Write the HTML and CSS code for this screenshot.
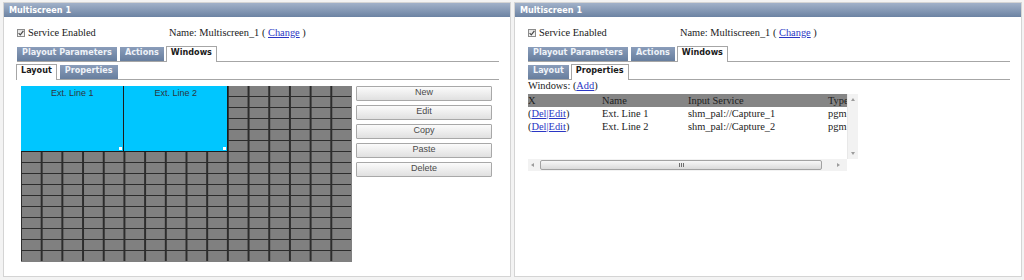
FILE: index.html
```html
<!DOCTYPE html>
<html>
<head>
<meta charset="utf-8">
<title>Multiscreen</title>
<link rel="stylesheet" href="styles.css">
</head>
<body>
<div class="panel">
  <div class="phead">Multiscreen 1</div>
  <div class="pbody">
    <div class="info">
      <label class="svc"><span class="cb"><svg width="6" height="6" viewBox="0 0 6 6"><path d="M0.6 3.1 L2.3 4.9 L5.4 0.8" fill="none" stroke="#4a4a4a" stroke-width="1.2"/></svg></span>Service Enabled</label>
      <div class="name">Name: Multiscreen_1 ( <a href="#">Change</a> )</div>
    </div>
    <div class="tabs">
      <span class="tab">Playout Parameters</span><span class="tab">Actions</span><span class="tab active">Windows</span>
    </div>
    <div class="tabs sub">
      <span class="tab active">Layout</span><span class="tab">Properties</span>
    </div>
    <div class="layout">
      <div class="canvas">
        <div class="win" style="left:0%;top:0%;width:31.25%;height:37.5%">Ext. Line 1<span class="handle"></span></div>
        <div class="win" style="left:31.25%;top:0%;width:31.25%;height:37.5%">Ext. Line 2<span class="handle"></span></div>
      </div>
      <div class="btns">
        <div class="btn">New</div>
        <div class="btn">Edit</div>
        <div class="btn">Copy</div>
        <div class="btn">Paste</div>
        <div class="btn">Delete</div>
      </div>
    </div>
  </div>
</div>
<div class="panel">
  <div class="phead">Multiscreen 1</div>
  <div class="pbody">
    <div class="info">
      <label class="svc"><span class="cb"><svg width="6" height="6" viewBox="0 0 6 6"><path d="M0.6 3.1 L2.3 4.9 L5.4 0.8" fill="none" stroke="#4a4a4a" stroke-width="1.2"/></svg></span>Service Enabled</label>
      <div class="name">Name: Multiscreen_1 ( <a href="#">Change</a> )</div>
    </div>
    <div class="tabs">
      <span class="tab">Playout Parameters</span><span class="tab">Actions</span><span class="tab active">Windows</span>
    </div>
    <div class="tabs sub">
      <span class="tab">Layout</span><span class="tab active">Properties</span>
    </div>
    <div class="wtitle">Windows: (<a href="#">Add</a>)</div>
    <div class="scroller">
      <div class="viewport">
        <table>
          <colgroup><col class="c1"><col class="c2"><col class="c3"><col class="c4"></colgroup>
          <thead><tr><th>X</th><th>Name</th><th>Input Service</th><th>Type</th></tr></thead>
          <tbody>
            <tr><td>(<a href="#">Del</a><a href="#">|Edit</a>)</td><td>Ext. Line 1</td><td>shm_pal://Capture_1</td><td>pgm</td></tr>
            <tr><td>(<a href="#">Del</a><a href="#">|Edit</a>)</td><td>Ext. Line 2</td><td>shm_pal://Capture_2</td><td>pgm</td></tr>
          </tbody>
        </table>
      </div>
      <div class="vbar"><span class="arr up"></span><span class="arr down"></span></div>
      <div class="hbar"><span class="arr left"></span><span class="thumb"><span class="grip"></span></span><span class="arr right"></span></div>
      <div class="corner"></div>
    </div>
  </div>
</div>
</body>
</html>
```

FILE: styles.css
```css
* { box-sizing: border-box; }
html, body { margin: 0; }
body {
  background: #f3f3f3;
  display: flex;
  gap: 3px;
  padding: 2px 0 0 3px;
  height: 280px;
  overflow: hidden;
  font-family: "Liberation Serif", serif;
  font-size: 10.4px;
  color: #1a1a1a;
}
a { color: #2a36c4; text-decoration: underline; }

.panel {
  width: 508px;
  height: 275px;
  background: #fff;
  border: 1px solid #d4d4d4;
  display: flex;
  flex-direction: column;
}
.phead {
  height: 14px;
  line-height: 14px;
  padding-left: 5px;
  background: linear-gradient(#a1b1c9, #6c83a3);
  color: #fff;
  font: bold 9px "DejaVu Sans Condensed", "DejaVu Sans", sans-serif;
  line-height: 14px;
}
.pbody { padding: 0 11px 0 13px; }

.info {
  display: grid;
  grid-template-columns: 152px auto;
  margin-top: 9px;
  height: 13px;
  line-height: 13px;
  align-items: center;
}
.svc { display: flex; align-items: center; gap: 3px; }
.cb {
  width: 8px; height: 8px;
  border: 1px solid #8b8b8b;
  background: linear-gradient(#e4e4e4, #f8f8f8);
  display: flex; align-items: center; justify-content: center;
}
.cb svg { display: block; }

.tabs {
  display: flex;
  align-items: flex-end;
  height: 16px;
  margin-top: 7px;
  border-bottom: 1px solid #a6a6a6;
}
.tabs.sub { margin-top: 2px; }
.tab {
  height: 14px;
  line-height: 15px;
  padding: 0 5px;
  margin-right: 3px;
  background: linear-gradient(#8a9dba, #677e9e);
  color: #eef2f8;
  font: bold 9px "DejaVu Sans Condensed", "DejaVu Sans", sans-serif;
  white-space: nowrap;
}
.tab.active {
  height: 16px;
  margin-bottom: -1px;
  margin-left: -1px;
  padding: 0 4px;
  background: #fff;
  color: #1a1a1a;
  border: 1px solid #a6a6a6;
  border-bottom: none;
}

.layout {
  display: flex;
  align-items: flex-start;
  gap: 4px;
  margin-top: 6px;
  padding-left: 4px;
}
.canvas {
  position: relative;
  width: 331px;
  height: 176px;
  background: #808080;
  overflow: hidden;
  flex: none;
}
.canvas::before {
  content: "";
  display: block;
  width: 100%;
  height: 100%;
  margin: -1.5px 0 0 -1.5px;
  background-image:
    linear-gradient(to right, #2c2c2c 0 1.5px, transparent 1.5px),
    linear-gradient(to bottom, #2c2c2c 0 1.5px, transparent 1.5px);
  background-size: 20.6875px 11px;
}
.win {
  position: absolute;
  background: #00c6ff;
  border-right: 1px solid #1c1c1c;
  border-bottom: 1px solid #1c1c1c;
  font: 9px "Liberation Sans", Arial, sans-serif;
  color: #2c3540;
  text-align: center;
  line-height: 11px;
  padding-top: 2px;
}
.handle {
  position: absolute;
  right: 1px;
  bottom: 1px;
  width: 3px;
  height: 3px;
  background: #fff;
}
.btns {
  width: 136px;
  display: flex;
  flex-direction: column;
  gap: 4px;
}
.btn {
  height: 15px;
  line-height: 14px;
  border: 1px solid #a8a8a8;
  border-radius: 1px;
  background: linear-gradient(#fbfbfb, #e0e0e0);
  font: 9px "Liberation Sans", Arial, sans-serif;
  color: #4a4a4a;
  text-align: center;
}

.wtitle { height: 14px; line-height: 12px; }
.scroller {
  display: grid;
  grid-template-columns: 319px 11px;
  grid-template-rows: 65px 12px;
  width: 330px;
}
.viewport { overflow: hidden; background: #fff; }
table {
  border-collapse: collapse;
  table-layout: fixed;
  width: 341px;
  font: 10.4px "Liberation Serif", serif;
}
col.c1 { width: 74px; }
col.c2 { width: 86px; }
col.c3 { width: 140px; }
col.c4 { width: 41px; }
th {
  background: #858585;
  color: #1e1e1e;
  font-weight: normal;
  text-align: left;
  padding: 0;
  height: 13px;
  line-height: 13px;
  white-space: nowrap;
}
td {
  padding: 0;
  height: 13px;
  line-height: 13px;
  white-space: nowrap;
}
.vbar {
  background: #f2f2f2;
  border-left: 1px solid #e8e8e8;
  display: flex;
  flex-direction: column;
  justify-content: space-between;
  align-items: center;
  padding: 4px 0 4px;
}
.hbar {
  background: #f2f2f2;
  display: flex;
  align-items: center;
  padding: 0 3px 0 3px;
}
.corner { background: #fff; }
.arr { width: 0; height: 0; display: block; border: 2px solid transparent; }
.arr.up { border-bottom: 3px solid #9c9c9c; border-top-width: 0; }
.arr.down { border-top: 3px solid #9c9c9c; border-bottom-width: 0; }
.arr.left { border-right: 3px solid #9c9c9c; border-left-width: 0; }
.arr.right { border-left: 3px solid #9c9c9c; border-right-width: 0; margin-left: auto; margin-right: 4px; }
.thumb {
  margin-left: 6px;
  width: 282px;
  height: 10px;
  border: 1px solid #a2a2a2;
  border-radius: 2px;
  background: linear-gradient(#f7f7f7, #dadada);
  display: flex;
  align-items: center;
  justify-content: center;
}
.grip {
  width: 5px;
  height: 4px;
  background: repeating-linear-gradient(to right, #6e6e6e 0 1px, transparent 1px 2px);
}
```
